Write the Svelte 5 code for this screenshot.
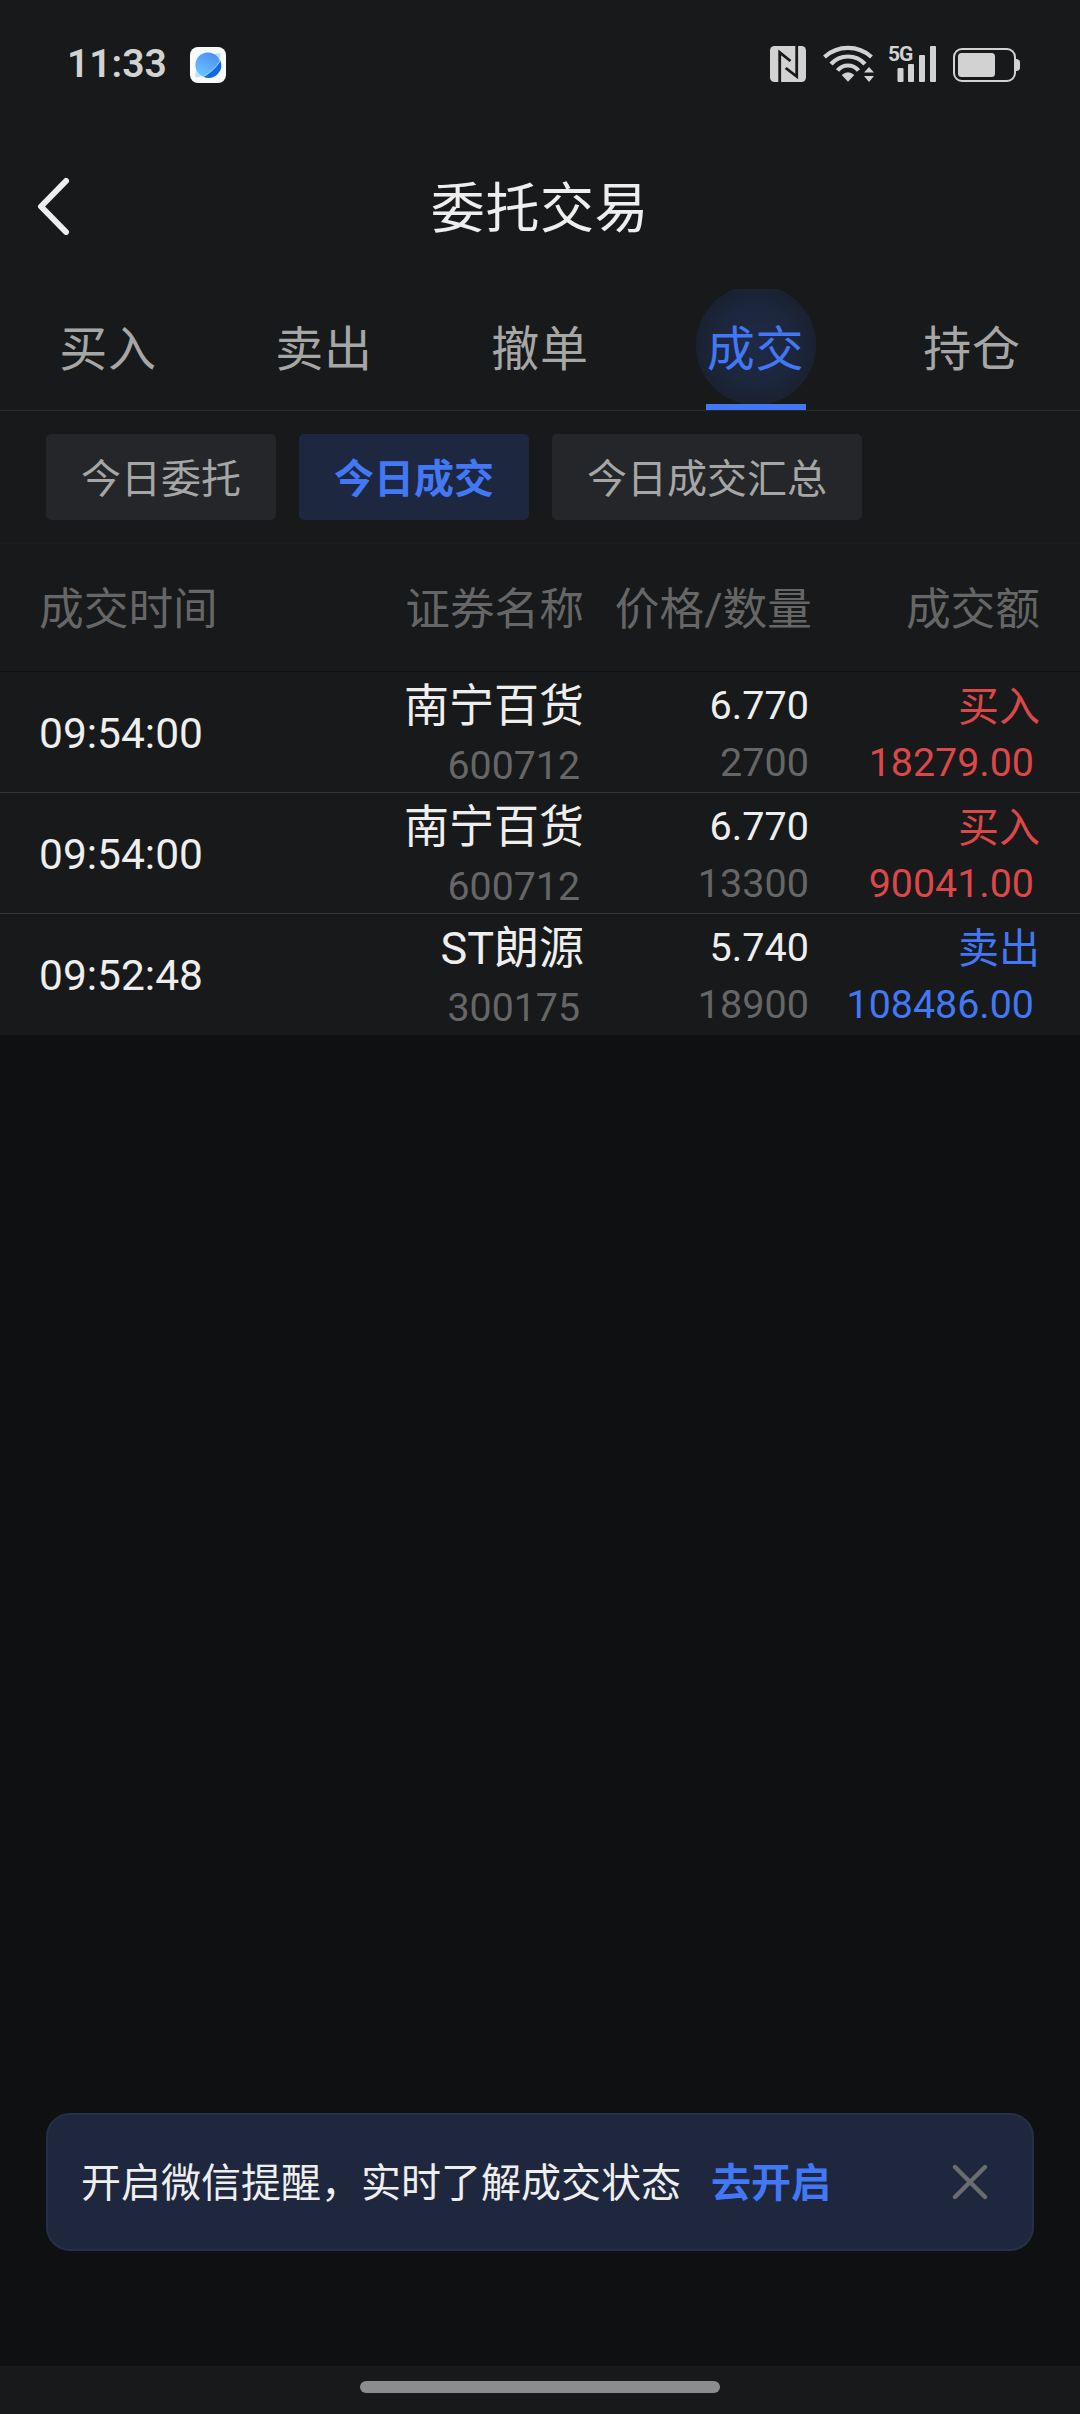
<script lang="ts">
	const tabs = ['买入', '卖出', '撤单', '成交', '持仓'];
	const filters = ['今日委托', '今日成交', '今日成交汇总'];

	const deals = [
		{
			time: '09:54:00',
			name: '南宁百货',
			code: '600712',
			price: '6.770',
			count: '2700',
			side: '买入',
			amount: '18279.00'
		},
		{
			time: '09:54:00',
			name: '南宁百货',
			code: '600712',
			price: '6.770',
			count: '13300',
			side: '买入',
			amount: '90041.00'
		},
		{
			time: '09:52:48',
			name: 'ST朗源',
			code: '300175',
			price: '5.740',
			count: '18900',
			side: '卖出',
			amount: '108486.00'
		}
	];

	let tab = $state('成交');
	let filter = $state('今日成交');
	let notice = $state(true);
</script>

<div class="screen">
	<header class="status">
		<span class="clock">11:33</span>
		<svg class="app" width="36" height="36" viewBox="0 0 36 36">
			<defs>
				<linearGradient id="globe" x1="0.8" y1="0" x2="0.2" y2="1">
					<stop offset="0" stop-color="#4a8cf5" />
					<stop offset="1" stop-color="#6cc8ff" />
				</linearGradient>
			</defs>
			<rect width="36" height="36" rx="8" fill="#f8fafd" />
			<path d="M24 7.500Q29 5 30.500 6.500Q31 9 28.500 14ZM7 22Q4.500 27 5.500 30Q8 31 14 28Z" fill="#b9e2ff" />
			<circle cx="18" cy="18" r="12.600" fill="url(#globe)" />
			<path d="M30.300 13.500A12.600 12.600 0 0 1 13.500 29.800Q24 24 30.300 13.500Z" fill="#1268e3" />
			<path d="M30.300 13.500Q24 24 13.500 29.500" fill="none" stroke="#a5dcff" stroke-width="1" />
		</svg>
		<svg class="icons" width="252" height="60" viewBox="770 34 252 60" fill="#d2d2d2">
			<!-- nfc -->
			<rect x="770" y="46" width="36" height="36" rx="4.500" />
			<path
				d="M779.700 82V52.500L790.500 61M796.700 46V76.500L785.700 68"
				fill="none"
				stroke="#17191a"
				stroke-width="2.800"
			/>
			<!-- wifi -->
			<g fill="none" stroke="#d2d2d2" stroke-width="4.200">
				<path d="M824.500 57A35 35 0 0 1 871.500 57" />
				<path d="M831 64A23 23 0 0 1 865 64" />
				<path d="M837.500 70.500A13.500 13.500 0 0 1 858.500 70.500" />
			</g>
			<path d="M841.700 75Q848 69.500 854.300 75L848 81.800Z" />
			<path d="M864 72.500L869 67L874 72.500ZM864 76L869 82L874 76Z" />
			<!-- signal -->
			<text x="888" y="61" class="net">5G</text>
			<rect x="897.500" y="68" width="6" height="14" rx="1" />
			<rect x="908" y="64" width="6" height="18" rx="1" />
			<rect x="919" y="55" width="6" height="27" rx="1" />
			<rect x="930" y="46" width="6" height="36" rx="1" />
			<!-- battery -->
			<rect x="954" y="49" width="61" height="32" rx="8" fill="none" stroke="#d2d2d2" stroke-width="2" />
			<rect x="958" y="53" width="37" height="24" rx="3.500" />
			<path d="M1016 59Q1020 59 1020 62.500V67.500Q1020 71 1016 71Z" />
		</svg>
	</header>

	<div class="title">
		<button class="back" aria-label="返回">
			<svg width="34" height="58" viewBox="0 0 34 58">
				<path d="M29 4L4 29.500L29 55" fill="none" stroke="#eee" stroke-width="6" stroke-linecap="round" stroke-linejoin="round" />
			</svg>
		</button>
		<h1>委托交易</h1>
	</div>

	<nav class="tabs">
		{#each tabs as name}
			<button class:active={tab === name} onclick={() => (tab = name)}>
				<span>{name}</span>
			</button>
		{/each}
	</nav>

	<div class="filters">
		{#each filters as name}
			<button class:active={filter === name} onclick={() => (filter = name)}>{name}</button>
		{/each}
	</div>

	<div class="cols head">
		<span>成交时间</span>
		<span>证券名称</span>
		<span>价格/数量</span>
		<span>成交额</span>
	</div>

	{#each deals as deal}
		<div class="cols row">
			<div class="time">{deal.time}</div>
			<div class="stock">
				<p class="name">{deal.name}</p>
				<p class="code">{deal.code}</p>
			</div>
			<div class="price">
				<p>{deal.price}</p>
				<p class="count">{deal.count}</p>
			</div>
			<div class="total" class:sell={deal.side === '卖出'}>
				<p class="side">{deal.side}</p>
				<p class="amount">{deal.amount}</p>
			</div>
		</div>
	{/each}

	<main>
		{#if notice}
			<div class="notice">
				<span>开启微信提醒，实时了解成交状态</span>
				<a href="#open">去开启</a>
				<button aria-label="关闭" onclick={() => (notice = false)}>
					<svg width="36" height="36" viewBox="0 0 36 36">
						<path d="M3 3L33 33M33 3L3 33" stroke="#6b6c70" stroke-width="4.400" stroke-linecap="round" />
					</svg>
				</button>
			</div>
		{/if}
	</main>

	<footer><i></i></footer>
</div>

<style>
	:global(body) {
		background: #0f1011;
	}

	.screen {
		display: flex;
		flex-direction: column;
		width: 1080px;
		height: 2414px;
		overflow: hidden;
		background: #0f1011;
		color: #eee;
		font-family: Roboto, 'Noto Sans CJK SC', sans-serif;
	}

	button {
		margin: 0;
		padding: 0;
		border: 0;
		background: none;
		color: inherit;
		font: inherit;
	}

	p,
	h1 {
		margin: 0;
	}

	.status {
		display: flex;
		align-items: center;
		box-sizing: border-box;
		height: 130px;
		padding: 0 58px 0 67px;
		background: #17191a;
	}

	.clock {
		width: 123px;
		margin-top: -2px;
		color: #d2d2d2;
		font-size: 39px;
		font-weight: 600;
		line-height: 40px;
	}

	.icons {
		margin-left: auto;
		margin-top: -2px;
	}

	.net {
		font-size: 21px;
		font-weight: 700;
		letter-spacing: -1px;
	}

	.title {
		display: grid;
		grid-template-columns: 1fr auto 1fr;
		align-items: center;
		height: 159px;
		background: #17191a;
	}

	.title h1 {
		margin-top: 1px;
		font-size: 54px;
		font-weight: 400;
		letter-spacing: 0.6px;
		line-height: 80px;
	}

	.back {
		justify-self: start;
		margin-left: 37px;
		margin-top: -8px;
		line-height: 0;
	}

	.tabs {
		display: flex;
		height: 121px;
		border-bottom: 1px solid #28292b;
		background: #17191a;
	}

	.tabs button {
		display: flex;
		flex: 1;
		justify-content: center;
		overflow: hidden;
		color: #a6a6a6;
		font-size: 48px;
		letter-spacing: 0.8px;
		line-height: 121px;
	}

	.tabs .active {
		background: radial-gradient(circle at 108px 56px, #1e2a45 0, #1c273d 38px, #1a2130 59.500px, transparent 60.500px);
		color: #4278f5;
	}

	.tabs .active span {
		box-sizing: border-box;
		height: 121px;
		padding: 0 2px 0 1px;
		border-bottom: 6px solid #4278f5;
	}

	.filters {
		display: flex;
		gap: 23px;
		padding: 23px 46px;
		border-bottom: 1px solid #1b1c1e;
		background: #17191a;
	}

	.filters button {
		height: 86px;
		padding: 0 35px;
		border-radius: 5px;
		background: #252629;
		color: #a6a6a6;
		font-size: 40px;
		line-height: 92px;
	}

	.filters .active {
		background: #1e2740;
		color: #4278f5;
		font-weight: 700;
	}

	.cols {
		display: grid;
		grid-template-columns: 300px 245px 228px 1fr;
		box-sizing: border-box;
		padding: 0 40px 0 39px;
		background: #17191a;
		text-align: right;
	}

	.head {
		height: 128px;
		border-bottom: 1px solid #111213;
		color: #666;
		font-size: 44.700px;
		line-height: 132px;
	}

	.head span:first-child,
	.time {
		text-align: left;
	}

	.row {
		height: 121px;
		border-bottom: 1px solid #343537;
		font-size: 39.600px;
	}

	.row:has(+ main) {
		border-bottom-color: #17191a;
	}

	.time {
		font-size: 42.500px;
		line-height: 124px;
	}

	.row p {
		height: 57px;
		line-height: 68px;
	}

	.row .name {
		font-size: 45px;
		line-height: 69px;
	}

	.row .code {
		padding-right: 4px;
		color: #666;
		font-size: 39.300px;
		line-height: 74px;
	}

	.price {
		padding-right: 3px;
	}

	.row .count {
		color: #666;
	}

	.total {
		color: #dc474a;
	}

	.row .side {
		font-size: 41px;
		line-height: 70px;
	}

	.total .amount {
		padding-right: 6px;
		font-size: 39.400px;
	}

	.total.sell {
		color: #4278f5;
	}

	main {
		display: flex;
		flex: 1;
		flex-direction: column;
		justify-content: flex-end;
		padding: 0 46px 115px;
	}

	.notice {
		display: flex;
		align-items: center;
		box-sizing: border-box;
		height: 138px;
		padding: 0 44px 0 33px;
		border: 2px solid #252f47;
		border-radius: 24px;
		background: #1e273e;
		font-size: 40px;
		line-height: 60px;
	}

	.notice span,
	.notice a {
		margin-top: 3px;
	}

	.notice a {
		margin-left: 30px;
		color: #4278f5;
		font-weight: 700;
		text-decoration: none;
	}

	.notice button {
		margin-left: auto;
		line-height: 0;
	}

	footer {
		display: flex;
		height: 48px;
		background: #17191a;
	}

	footer i {
		width: 360px;
		height: 12px;
		margin: 15px auto 0;
		border-radius: 6px;
		background: #8b8c8e;
	}
</style>
